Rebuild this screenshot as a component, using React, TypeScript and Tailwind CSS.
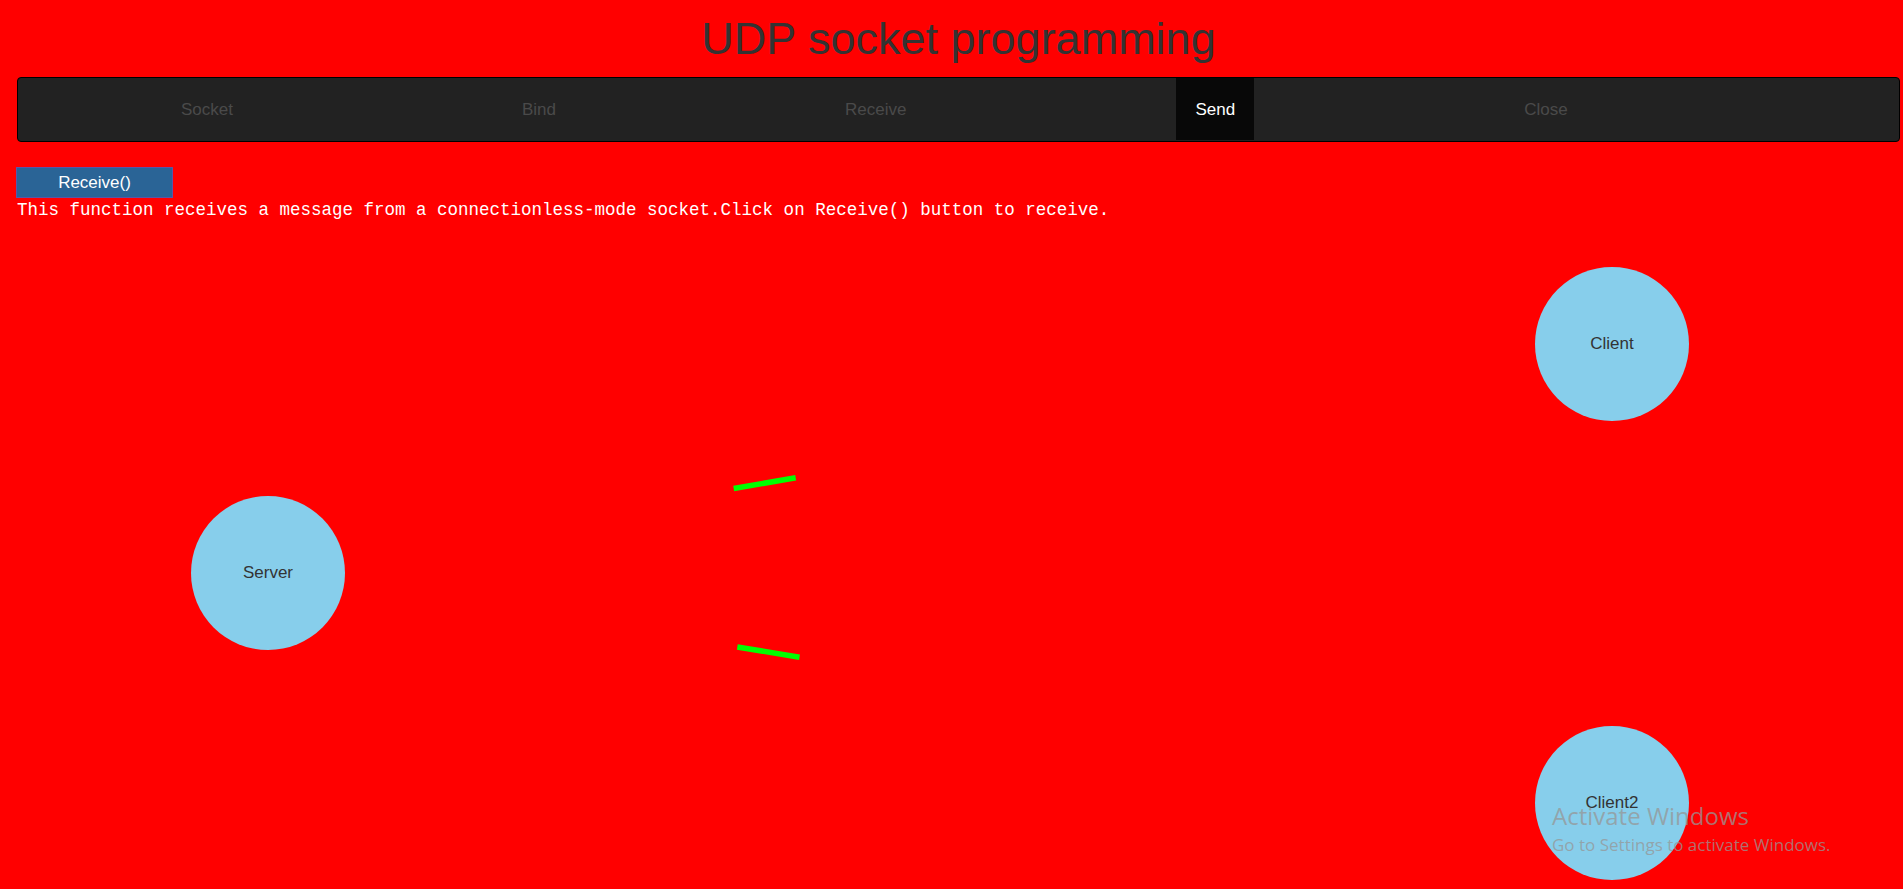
import React from "react";

const tabs = ["Socket", "Bind", "Receive", "Send", "Close"];

function Node({ label, left, top }: { label: string; left: number; top: number }) {
  return (
    <div
      className="absolute flex h-[154px] w-[154px] items-center justify-center rounded-full bg-[#87ceeb] text-[17px] text-[#333]"
      style={{ left, top }}
    >
      {label}
    </div>
  );
}

export default function App() {
  return (
    <div className="relative h-screen w-full overflow-hidden bg-[#ff0000] font-['Liberation_Sans',Arial,sans-serif]">
      <div className="pl-[17px] pr-[3px]">
        <h1 className="mt-[13px] text-center text-[45px] font-normal leading-[51.75px] text-[#333]">
          UDP socket programming
        </h1>
        <nav className="mt-[12.5px] flex h-[65px] items-start gap-[251px] rounded-[4px] border border-black bg-[#222] pl-[144px]">
          {tabs.map((t) => (
            <div
              key={t}
              className={
                t === "Send"
                  ? "flex h-[62px] items-center bg-[#080808] px-[19px] text-[17px] text-white"
                  : "flex h-[62px] items-center px-[19px] text-[17px] text-[#4a4a4a]"
              }
            >
              {t}
            </div>
          ))}
        </nav>
        <button className="-ml-px mt-[25px] block h-[31px] w-[157px] border border-[#5b55a8] bg-[#2a6496] text-[17px] text-white">
          Receive()
        </button>
        <p className="mt-[2px] font-['Liberation_Mono','Courier_New',monospace] text-[17.5px] leading-[20px] text-white">
          This function receives a message from a connectionless-mode socket.Click on Receive() button to receive.
        </p>
      </div>

      <svg className="pointer-events-none absolute left-0 top-0" width="1903" height="889">
        <line x1="733.7" y1="488.5" x2="795.7" y2="477.8" stroke="#00ff00" strokeWidth="5.5" />
        <line x1="737.3" y1="647" x2="799.5" y2="657.2" stroke="#00ff00" strokeWidth="5.5" />
      </svg>

      <Node label="Server" left={191} top={496} />
      <Node label="Client" left={1535} top={267} />
      <Node label="Client2" left={1535} top={726} />

      <div className="pointer-events-none absolute left-[1552px] top-[800px] font-['Open_Sans','Noto_Sans',sans-serif] text-[rgba(150,150,150,0.75)]">
        <div className="text-[24px] leading-[32px]">Activate Windows</div>
        <div className="mt-[3px] text-[17px] leading-[20px]">Go to Settings to activate Windows.</div>
      </div>
    </div>
  );
}
